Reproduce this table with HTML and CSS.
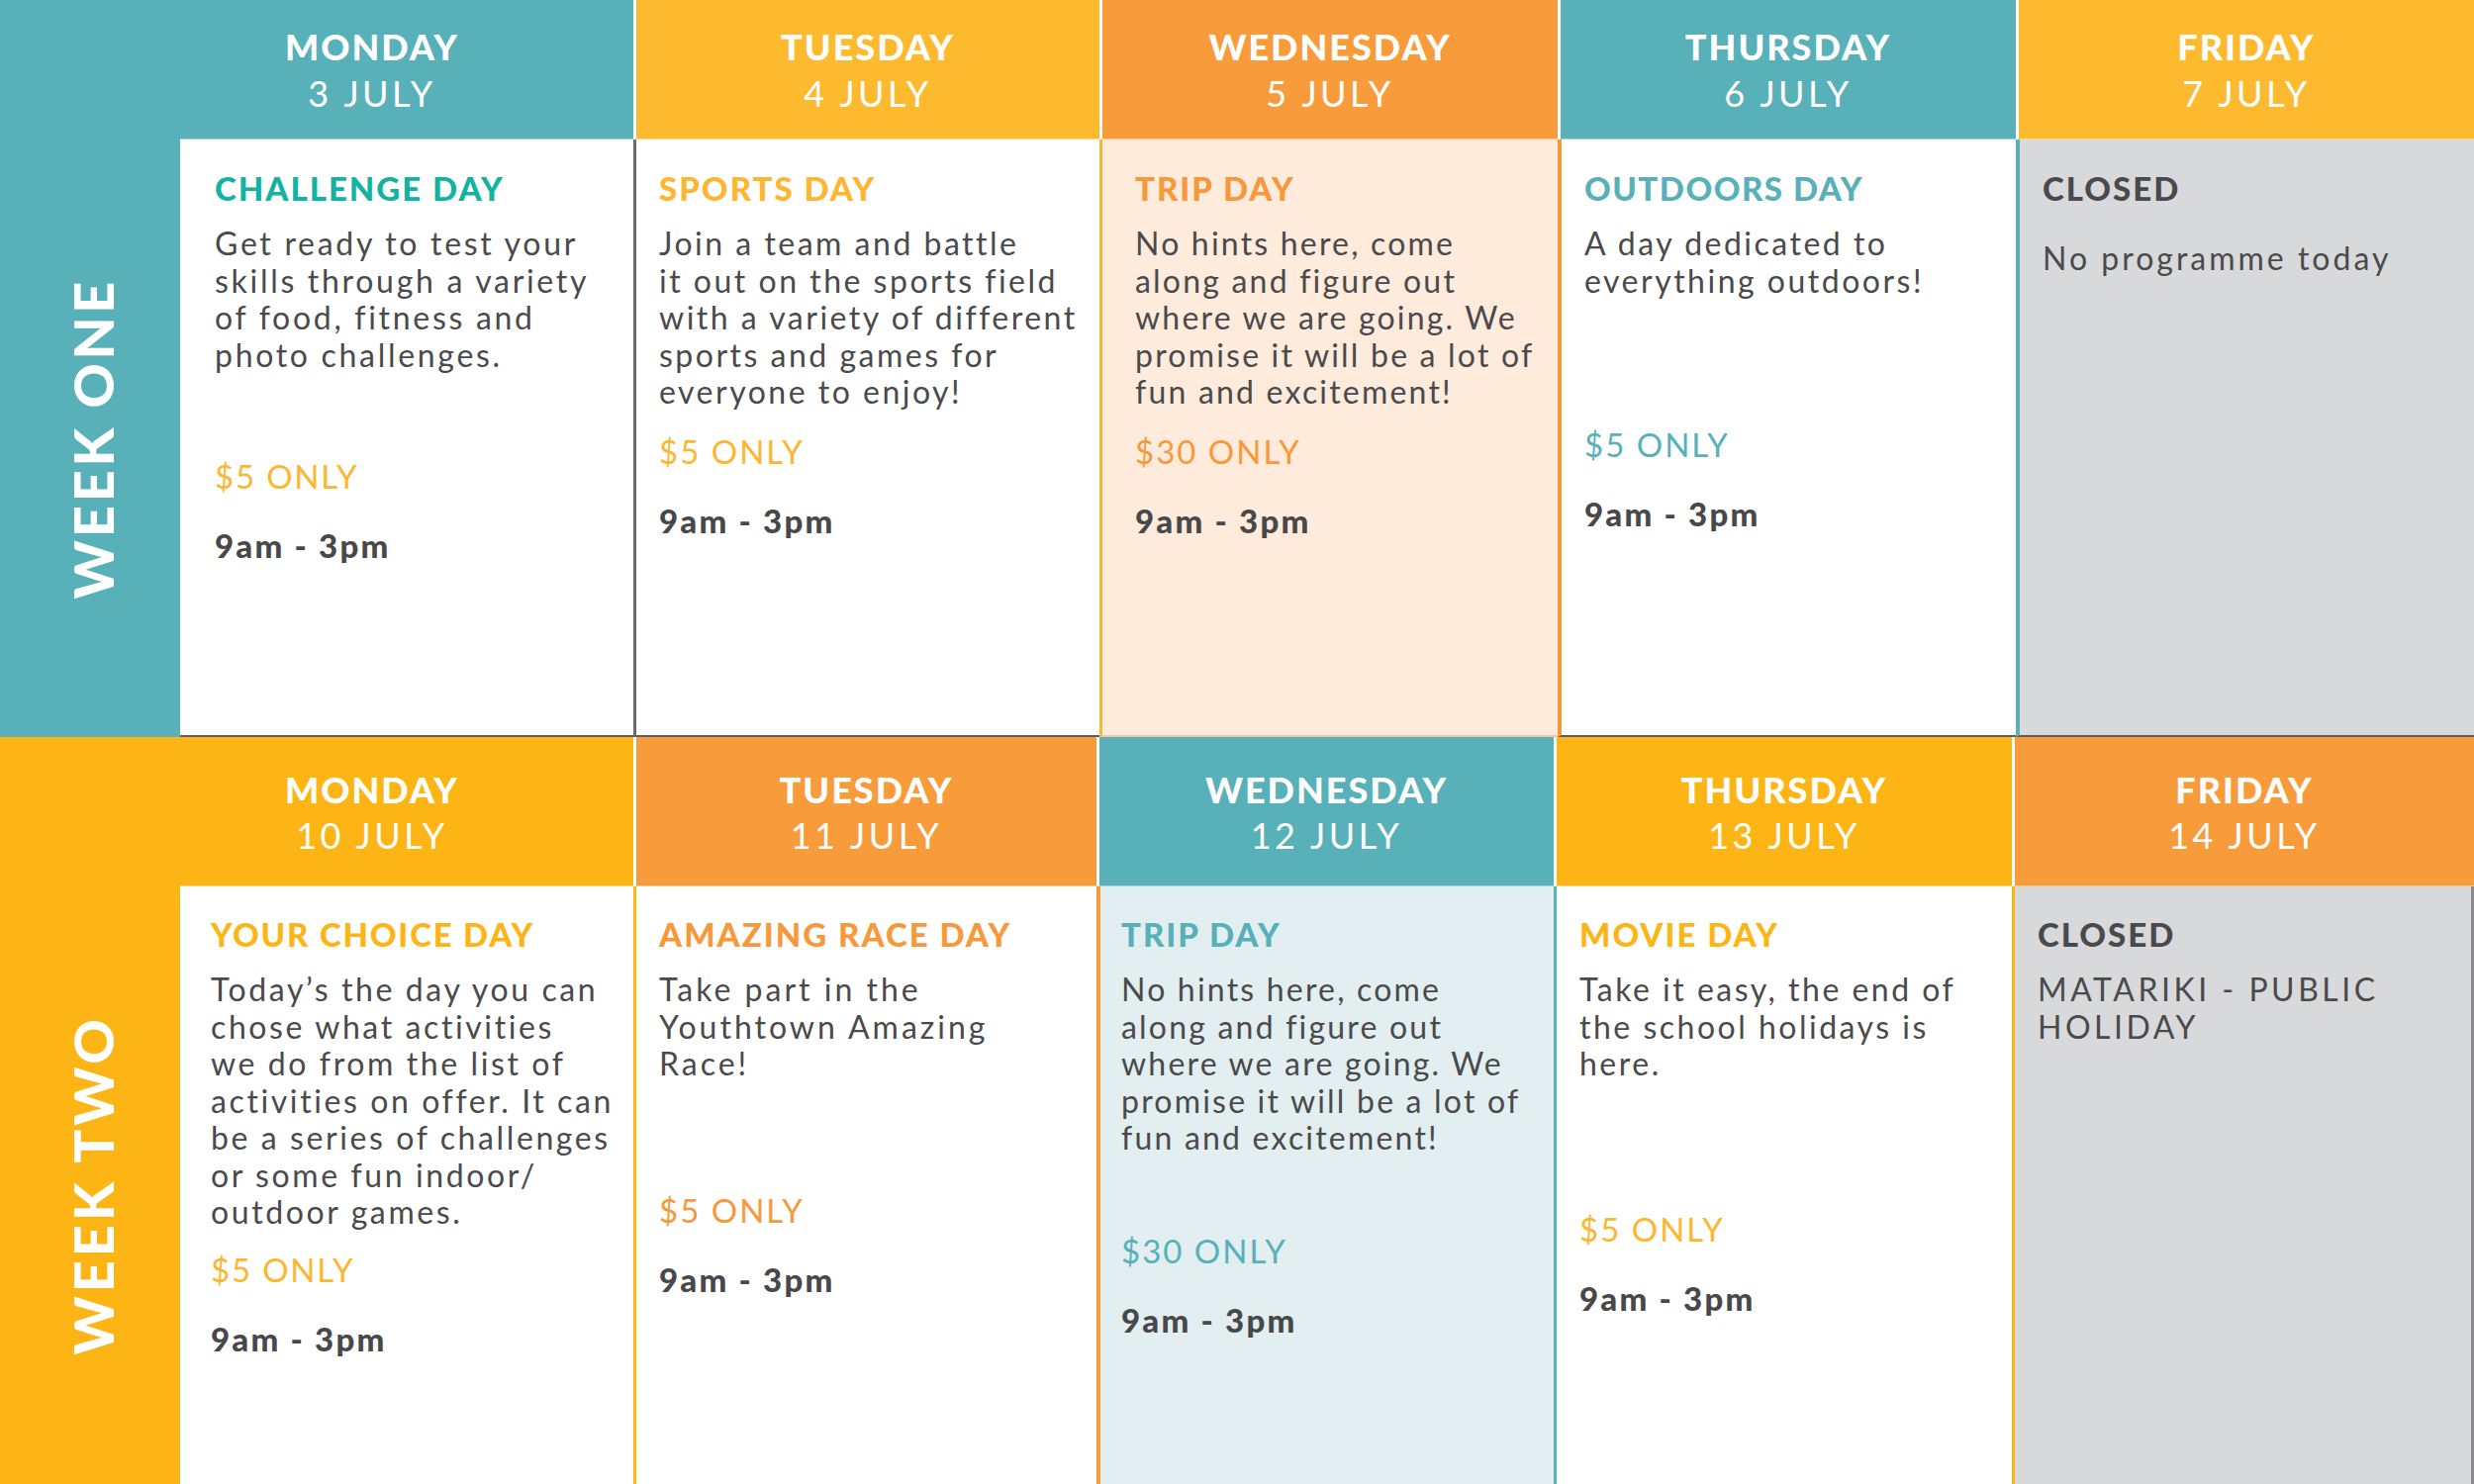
FILE: index.html
```html
<!DOCTYPE html>
<html lang="en">
<head>
<meta charset="utf-8">
<title>Holiday Programme</title>
<link rel="stylesheet" href="styles.css">
</head>
<body>
<div class="planner">
  <section class="week week-one">
    <div class="corner bg-teal"></div>
    <div class="head bg-teal head-mon"><span class="dow">MONDAY</span><span class="date">3 JULY</span></div>
    <div class="head bg-yellow"><span class="dow">TUESDAY</span><span class="date">4 JULY</span></div>
    <div class="head bg-orange"><span class="dow">WEDNESDAY</span><span class="date">5 JULY</span></div>
    <div class="head bg-teal"><span class="dow">THURSDAY</span><span class="date">6 JULY</span></div>
    <div class="head bg-yellow"><span class="dow">FRIDAY</span><span class="date">7 JULY</span></div>

    <div class="label bg-teal"><span>WEEK ONE</span></div>
    <div class="day day-mon w1-mon">
      <h3 class="title c-green">CHALLENGE DAY</h3>
      <p class="desc">Get ready to test your<br>skills through a variety<br>of food, fitness and<br>photo challenges.</p>
      <p class="price c-yellow">$5 ONLY</p>
      <p class="time">9am - 3pm</p>
    </div>
    <div class="day w1-tue">
      <h3 class="title c-yellow">SPORTS DAY</h3>
      <p class="desc">Join a team and battle<br>it out on the sports field<br>with a variety of different<br>sports and games for<br>everyone to enjoy!</p>
      <p class="price c-yellow">$5 ONLY</p>
      <p class="time">9am - 3pm</p>
    </div>
    <div class="day w1-wed">
      <h3 class="title c-orange">TRIP DAY</h3>
      <p class="desc">No hints here, come<br>along and figure out<br>where we are going. We<br>promise it will be a lot of<br>fun and excitement!</p>
      <p class="price c-orange">$30 ONLY</p>
      <p class="time">9am - 3pm</p>
    </div>
    <div class="day w1-thu">
      <h3 class="title c-teal">OUTDOORS DAY</h3>
      <p class="desc">A day dedicated to<br>everything outdoors!</p>
      <p class="price c-teal">$5 ONLY</p>
      <p class="time">9am - 3pm</p>
    </div>
    <div class="day w1-fri closed">
      <h3 class="title c-dark">CLOSED</h3>
      <p class="desc note">No programme today</p>
    </div>
  </section>

  <section class="week week-two">
    <div class="corner bg-yellow2"></div>
    <div class="head bg-yellow2 head-mon"><span class="dow">MONDAY</span><span class="date">10 JULY</span></div>
    <div class="head bg-orange"><span class="dow">TUESDAY</span><span class="date">11 JULY</span></div>
    <div class="head bg-teal"><span class="dow">WEDNESDAY</span><span class="date">12 JULY</span></div>
    <div class="head bg-yellow2"><span class="dow">THURSDAY</span><span class="date">13 JULY</span></div>
    <div class="head bg-orange"><span class="dow">FRIDAY</span><span class="date">14 JULY</span></div>

    <div class="label bg-yellow2"><span>WEEK TWO</span></div>
    <div class="day day-mon w2-mon">
      <h3 class="title c-yellow2">YOUR CHOICE DAY</h3>
      <p class="desc">Today’s the day you can<br>chose what activities<br>we do from the list of<br>activities on offer. It can<br>be a series of challenges<br>or some fun indoor/<br>outdoor games.</p>
      <p class="price c-yellow">$5 ONLY</p>
      <p class="time">9am - 3pm</p>
    </div>
    <div class="day w2-tue">
      <h3 class="title c-orange">AMAZING RACE DAY</h3>
      <p class="desc">Take part in the<br>Youthtown Amazing<br>Race!</p>
      <p class="price c-orange">$5 ONLY</p>
      <p class="time">9am - 3pm</p>
    </div>
    <div class="day w2-wed">
      <h3 class="title c-teal">TRIP DAY</h3>
      <p class="desc">No hints here, come<br>along and figure out<br>where we are going. We<br>promise it will be a lot of<br>fun and excitement!</p>
      <p class="price c-teal">$30 ONLY</p>
      <p class="time">9am - 3pm</p>
    </div>
    <div class="day w2-thu">
      <h3 class="title c-yellow2">MOVIE DAY</h3>
      <p class="desc">Take it easy, the end of<br>the school holidays is<br>here.</p>
      <p class="price c-yellow">$5 ONLY</p>
      <p class="time">9am - 3pm</p>
    </div>
    <div class="day w2-fri closed">
      <h3 class="title c-dark">CLOSED</h3>
      <p class="desc">MATARIKI - PUBLIC<br>HOLIDAY</p>
    </div>
  </section>
</div>
</body>
</html>
```
FILE: styles.css
```css
* { box-sizing: border-box; }
html, body { margin: 0; padding: 0; background: #ffffff; }
body {
  font-family: "Lato", "Liberation Sans", sans-serif;
  color: #4a4a4c;
  width: 2500px;
  height: 1500px;
  overflow: hidden;
}
.planner { display: flex; flex-direction: column; width: 2500px; }

.week { display: grid; }
.week-one {
  grid-template-columns: 182px 458px 471px 463px 463px 463px;
  grid-template-rows: 141px 604px;
}
.week-two {
  grid-template-columns: 182px 458px 468px 462px 463px 467px;
  grid-template-rows: 151px 604px;
}

.bg-teal { background: #58b1b8; }
.bg-yellow { background: #feba2f; }
.bg-yellow2 { background: #fdb516; }
.bg-orange { background: #f89b3b; }

.c-green { color: #12b3a3; }
.c-teal { color: #58b1b8; }
.c-yellow { color: #fdb630; }
.c-yellow2 { color: #fdb516; }
.c-orange { color: #f7993a; }
.c-dark { color: #4a4a4c; }

/* headers */
.head {
  display: flex;
  flex-direction: column;
  align-items: center;
  color: #ffffff;
  border-left: 3px solid #ffffff;
  border-bottom: 1px solid rgba(255, 255, 255, 0.45);
  padding-top: 24px;
  font-size: 36px;
  line-height: 47px;
}
.week-two .head { padding-top: 30px; line-height: 46px; }
.head-mon { border-left: none; padding-right: 70px; }
.dow { font-weight: 900; letter-spacing: 2px; }
.date { font-weight: 400; letter-spacing: 3.5px; }

/* week labels */
.label {
  display: flex;
  align-items: center;
  justify-content: center;
}
.label span {
  writing-mode: vertical-rl;
  transform: rotate(180deg);
  color: #ffffff;
  font-weight: 900;
  font-size: 56px;
  letter-spacing: 3.5px;
  line-height: 1;
  margin-left: 6px;
}
.week-two .label span { letter-spacing: 4px; }

/* day bodies */
.day {
  background: #ffffff;
  padding: 29px 10px 0 23px;
}
.week-two .day { padding-top: 28px; }
.day p, .day h3 { margin: 0; white-space: nowrap; }
.title {
  font-size: 33px;
  line-height: 40px;
  font-weight: 900;
  letter-spacing: 2px;
}
.desc {
  margin-top: 17px !important;
  font-size: 32px;
  line-height: 37.5px;
  font-weight: 400;
  letter-spacing: 2.5px;
}
.price {
  font-size: 33px;
  line-height: 40px;
  font-weight: 400;
  letter-spacing: 2px;
}
.time {
  margin-top: 30px !important;
  font-size: 33px;
  line-height: 40px;
  font-weight: 900;
  letter-spacing: 2.2px;
  color: #48484a;
}

.day-mon { padding-left: 35px; }
.day-mon .desc { letter-spacing: 2.7px; }
.day-mon .title { letter-spacing: 2px; }
.day-mon .price { letter-spacing: 1.8px; }
.w2-mon { padding-left: 31px; }
.w2-mon .title { letter-spacing: 1.8px; }
.w2-mon .desc { letter-spacing: 2.6px; }

/* week one cells */
.week-one .day { border-bottom: 2px solid #5d5d60; }
.w1-tue { border-left: 3px solid #6a6a6c; }
.w1-wed { border-left: 3px solid #fdb630; background: #feebdc; padding-left: 33px; border-bottom-color: #f6c8a0 !important; }
.w1-wed .desc { letter-spacing: 2.2px; }
.w1-thu { border-left: 4px solid #f7993a; }
.w1-thu .title { letter-spacing: 1.5px; }
.w1-fri { border-left: 4px solid #58b1b8; }
.closed { background: #d8d9db; }

.w1-mon .price { margin-top: 84px; }
.w1-tue .price { margin-top: 21px; }
.w1-wed .price { margin-top: 21px; }
.w1-thu .price { margin-top: 127px; }
.w1-fri .note { margin-top: 32px !important; letter-spacing: 3px; }

/* week two cells */
.w2-tue { border-left: 3px solid #fdb516; }
.w2-tue .desc { letter-spacing: 3px; }
.w2-wed { border-left: 4px solid #f7993a; background: #e2eef0; padding-left: 21px; }
.w2-wed .desc { letter-spacing: 2.2px; }
.w2-thu { border-left: 3px solid #58b1b8; }
.w2-fri { border-left: 3px solid #fdb516; border-right: 3px solid #8a8a8c; }
.w2-fri .desc { letter-spacing: 3.5px; }

.w2-mon .price { margin-top: 19px; }
.w2-tue .price { margin-top: 109px; }
.w2-wed .price { margin-top: 75px; }
.w2-thu .price { margin-top: 128px; }
```
